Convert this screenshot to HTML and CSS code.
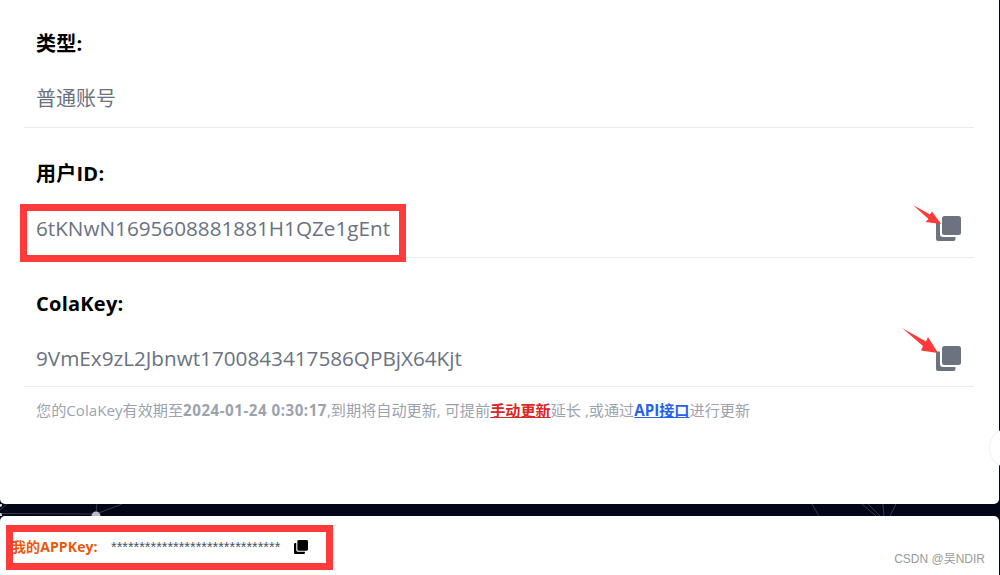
FILE: index.html
```html
<!DOCTYPE html>
<html lang="zh">
<head>
<meta charset="utf-8">
<title>账号信息</title>
<link rel="stylesheet" href="styles.css">
</head>
<body>
<svg width="0" height="0" class="defs">
  <defs>
    <symbol id="copy" viewBox="0 0 25 25">
      <path d="M2 5.500h2V18a3 3 0 0 0 3 3h12.500v2a2 2 0 0 1-2 2H2a2 2 0 0 1-2-2V7.500a2 2 0 0 1 2-2z"/>
      <rect x="6" y="0" width="19" height="19" rx="2.500"/>
    </symbol>
  </defs>
</svg>
<main class="card">
  <section class="row row-first">
    <h3 class="label">类型:</h3>
    <div class="value"><span>普通账号</span></div>
  </section>
  <section class="row">
    <h3 class="label">用户ID:</h3>
    <div class="value value-code"><span>6tKNwN1695608881881H1QZe1gEnt</span><svg class="copy"><use href="#copy"/></svg></div>
  </section>
  <section class="row row-last">
    <h3 class="label">ColaKey:</h3>
    <div class="value value-code"><span>9VmEx9zL2Jbnwt1700843417586QPBjX64Kjt</span><svg class="copy"><use href="#copy"/></svg></div>
  </section>
  <p class="note">您的ColaKey有效期至<b>2024-01-24 0:30:17</b>,到期将自动更新, 可提前<a class="red" href="#">手动更新</a>延长 ,或通过<a class="blue" href="#">API接口</a>进行更新</p>
</main>
<div class="band">
  <svg class="net" viewBox="0 0 1000 12" preserveAspectRatio="none">
    <g stroke="#9aa0ad" stroke-opacity=".35" stroke-width="1" fill="none">
      <path d="M0 9.500L96 10"/><path d="M96 10L97 0"/><path d="M96 10L122 0"/>
      <path d="M0 6L7 0"/><path d="M812 0L819 12"/><path d="M862 0L876 12"/>
      <path d="M868 0L880 12"/><path d="M883 0L884 12"/><path d="M896 0L890 12"/>
    </g>
    <circle cx="96" cy="12" r="4.500" fill="#b9bcc4"/>
    <circle cx="0" cy="1" r="2" fill="#d8dae0"/>
    <circle cx="0" cy="11" r="2" fill="#d8dae0"/>
  </svg>
</div>
<footer class="bar">
  <strong class="app-label">我的APPKey:</strong>
  <span class="stars">******************************</span>
  <svg class="copy-small"><use href="#copy"/></svg>
  <span class="mark">CSDN @吴NDIR</span>
</footer>
<div class="notch"></div>
<div class="box box-id"></div>
<div class="box box-app"></div>
<svg class="arrow arrow-1" viewBox="0 0 30 22"><path d="M0 0L17 9.500L19 6.500L28 19L12.500 17L15.500 14z"/></svg>
<svg class="arrow arrow-2" viewBox="0 0 38 28"><path d="M0 0L24 13.500L26 9L36 25L19 22.500L21 18z"/></svg>
</body>
</html>
```
FILE: styles.css
```css
* { box-sizing: border-box; }
html, body { margin: 0; height: 100%; }
body {
  position: relative;
  height: 575px;
  overflow: hidden;
  background: #020617;
  font-family: "Open Sans", "Noto Sans CJK SC", sans-serif;
}
.defs { position: absolute; }
.card {
  width: 999px;
  height: 504px;
  background: #fff;
  border-radius: 0 0 5px 5px;
  padding: 0 25px 0 24px;
}
.row {
  padding: 32px 12px 15px;
  border-bottom: 1px solid #e9ebee;
}
.row-first { padding-top: 30px; padding-bottom: 14px; }
.row-last { padding-bottom: 14px; }
.label {
  margin: 0;
  font-size: 20px;
  line-height: 28px;
  font-weight: 700;
  letter-spacing: .25px;
  color: #000;
}
.value {
  display: flex;
  align-items: center;
  justify-content: space-between;
  margin-top: 26px;
  height: 28px;
  font-size: 20px;
  line-height: 28px;
  color: #6b7280;
}
.value-code { font-size: 20.700px; }
.row-first .value { margin-top: 27px; }
.copy {
  width: 25px;
  height: 25px;
  margin-right: 1px;
  fill: #6b7280;
}
.note {
  margin: 13px 0 0;
  padding-left: 12px;
  font-size: 15.150px;
  line-height: 20px;
  color: #9ca3af;
}
.note b { font-weight: 700; letter-spacing: .5px; }
.red { color: #dc2626; font-weight: 700; }
.blue { color: #2563eb; font-weight: 700; }
.band { position: relative; height: 12px; }
.net { display: block; width: 100%; height: 12px; }
.bar {
  display: flex;
  align-items: center;
  position: relative;
  width: 999px;
  height: 59px;
  padding: 3px 0 0 12px;
  background: #fff;
  border-radius: 5px 5px 0 0;
}
.app-label {
  width: 99px;
  font-size: 14px;
  line-height: 20px;
  letter-spacing: .1px;
  color: #ea580c;
}
.stars {
  width: 183px;
  font-family: "Liberation Sans", sans-serif;
  font-size: 14.500px;
  line-height: 20px;
  color: #4b5563;
}
.copy-small { width: 14px; height: 14px; fill: #000; }
.mark {
  position: absolute;
  right: 14px;
  bottom: 8px;
  font-family: "Liberation Sans", "Noto Sans CJK SC", sans-serif;
  font-size: 12px;
  line-height: 16px;
  color: #9a9a9a;
}
.notch {
  position: absolute;
  left: 990px;
  top: 428px;
  width: 40px;
  height: 40px;
  border-radius: 50%;
  background: #fff;
  box-shadow: 0 0 2px #d9dbe0;
}
.box { position: absolute; border: 7px solid #fe3a3a; }
.box-id { left: 20px; top: 204px; width: 386px; height: 58px; }
.box-app { left: 6px; top: 525px; width: 327px; height: 45px; }
.arrow { position: absolute; fill: #fe3a3a; }
.arrow-1 { left: 913px; top: 205px; width: 30px; height: 22px; }
.arrow-2 { left: 902px; top: 328px; width: 38px; height: 28px; }
```
